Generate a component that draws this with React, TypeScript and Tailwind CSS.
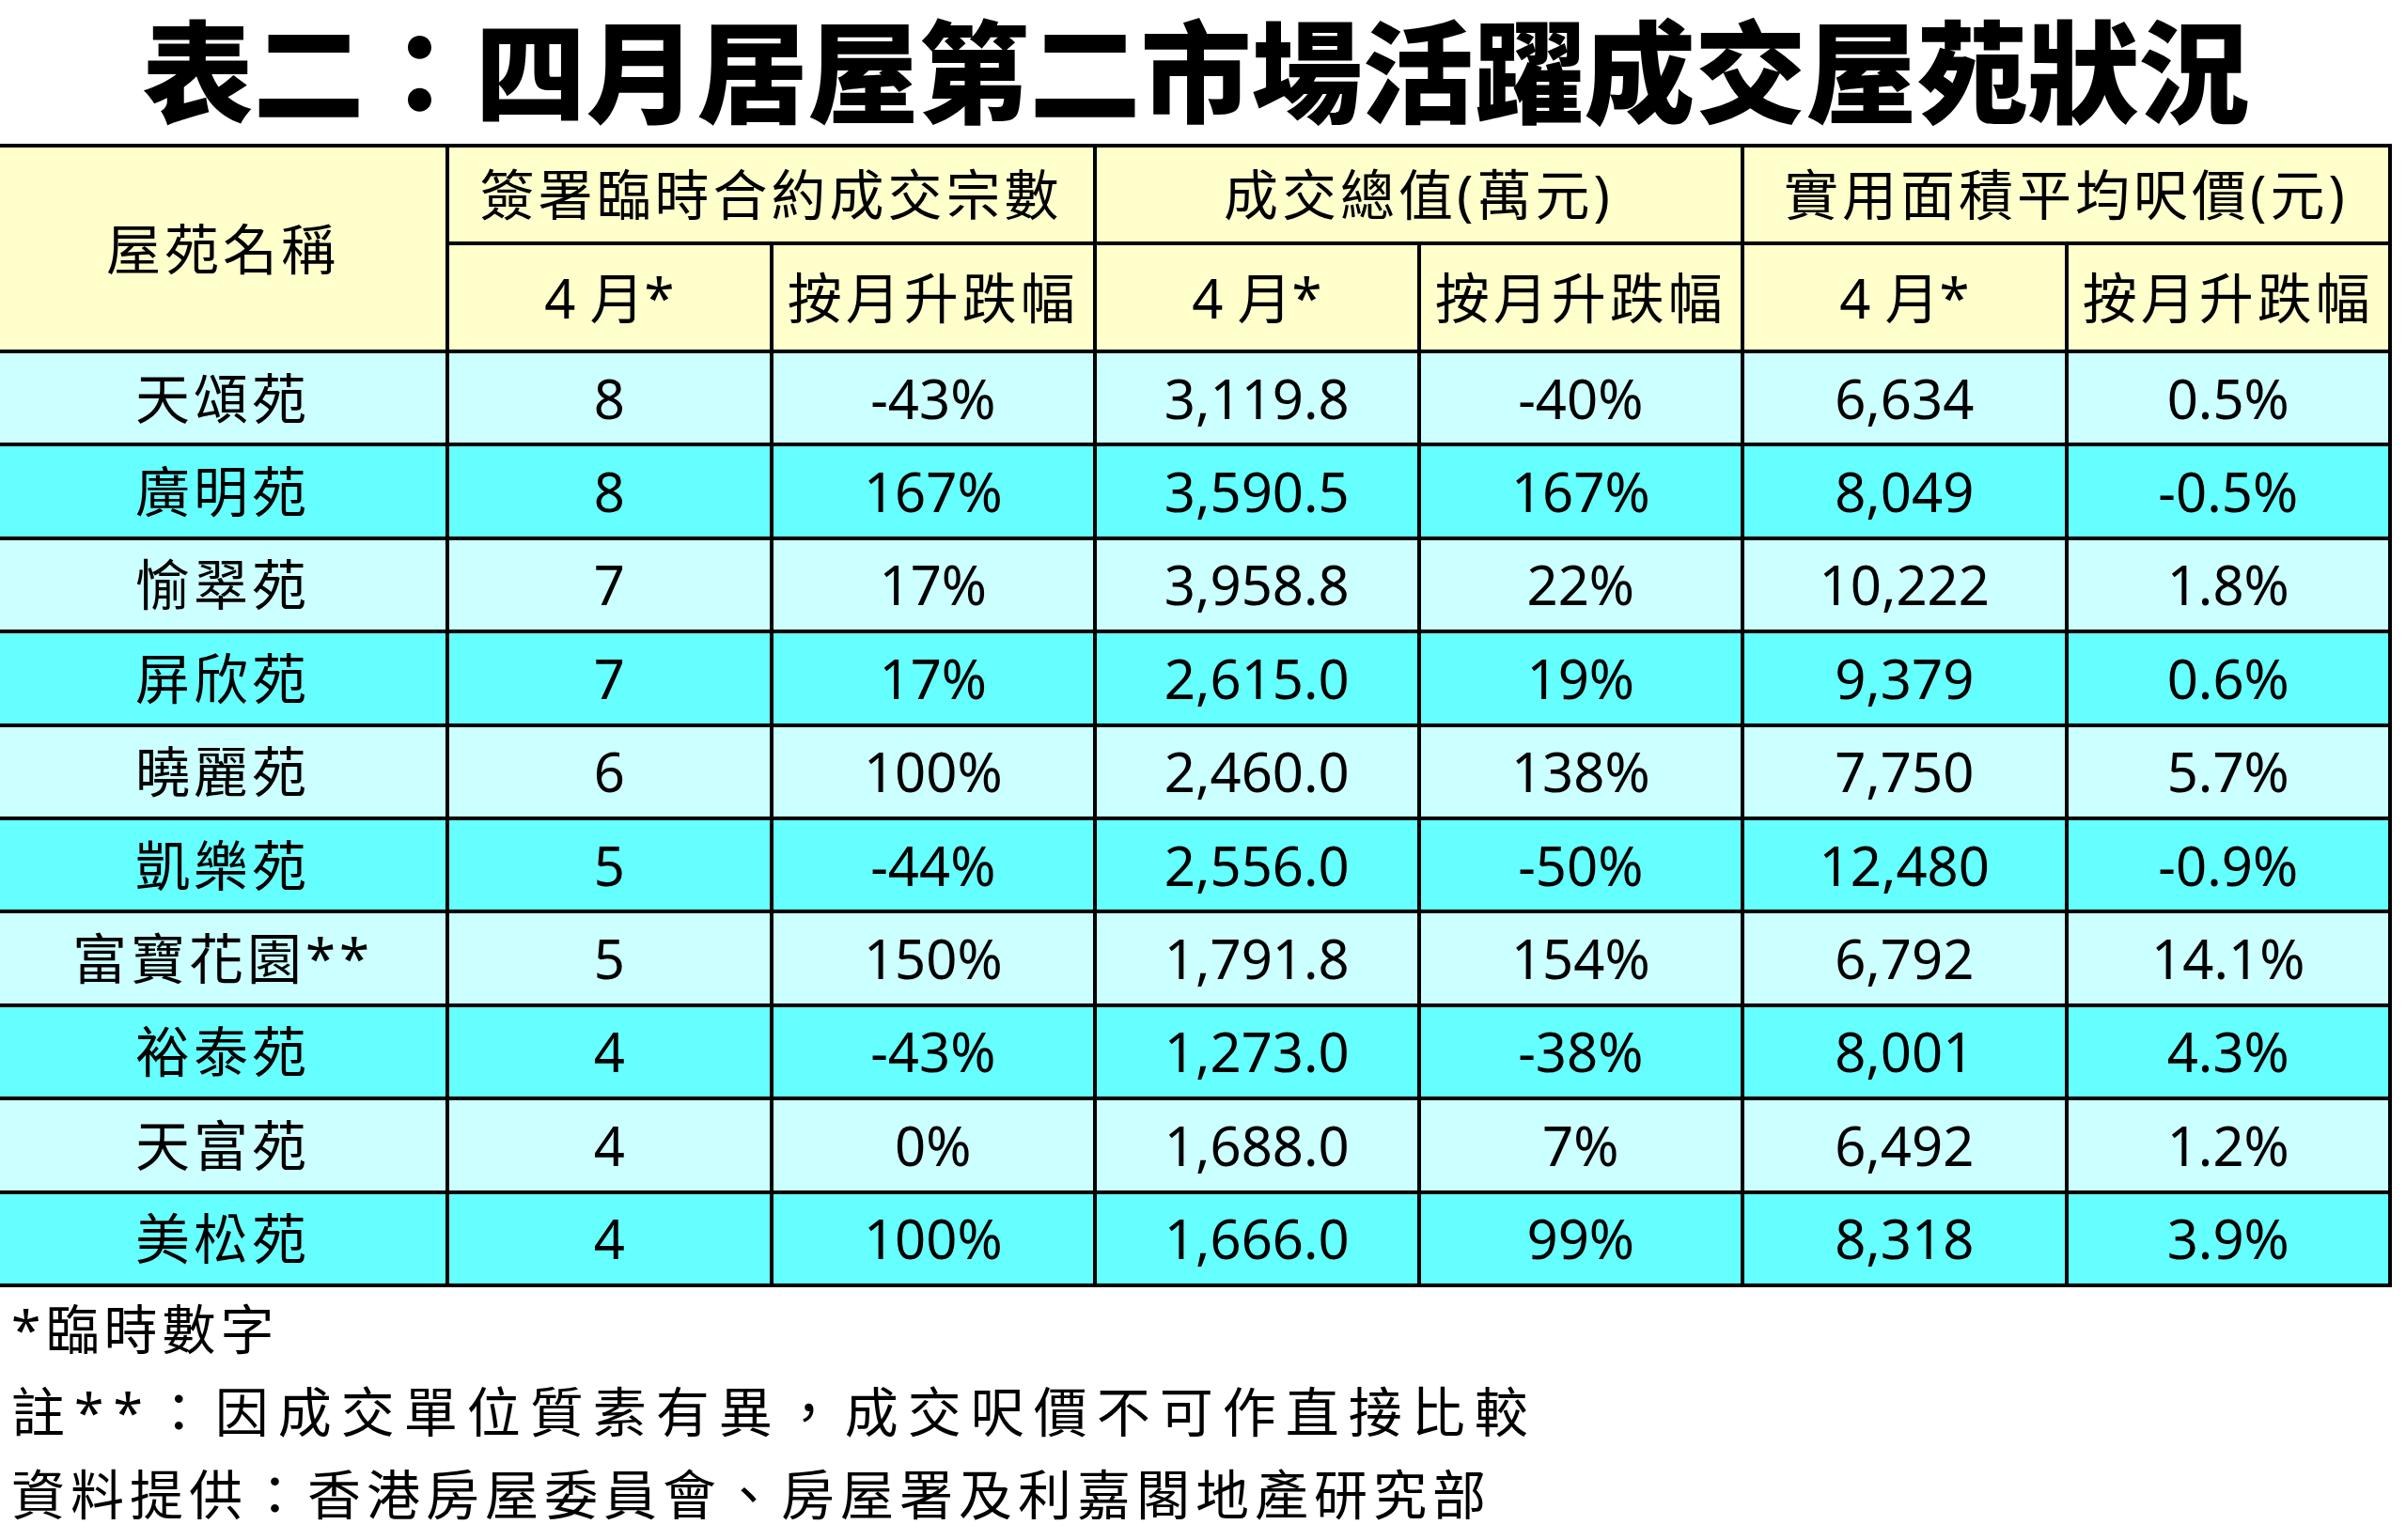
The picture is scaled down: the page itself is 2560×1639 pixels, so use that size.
import React from "react";

const rows: string[][] = [
  ["天頌苑", "8", "-43%", "3,119.8", "-40%", "6,634", "0.5%"],
  ["廣明苑", "8", "167%", "3,590.5", "167%", "8,049", "-0.5%"],
  ["愉翠苑", "7", "17%", "3,958.8", "22%", "10,222", "1.8%"],
  ["屏欣苑", "7", "17%", "2,615.0", "19%", "9,379", "0.6%"],
  ["曉麗苑", "6", "100%", "2,460.0", "138%", "7,750", "5.7%"],
  ["凱樂苑", "5", "-44%", "2,556.0", "-50%", "12,480", "-0.9%"],
  ["富寶花園**", "5", "150%", "1,791.8", "154%", "6,792", "14.1%"],
  ["裕泰苑", "4", "-43%", "1,273.0", "-38%", "8,001", "4.3%"],
  ["天富苑", "4", "0%", "1,688.0", "7%", "6,492", "1.2%"],
  ["美松苑", "4", "100%", "1,666.0", "99%", "8,318", "3.9%"],
];

const font = "font-['Noto_Sans','Noto_Sans_CJK_TC',sans-serif]";

export default function App() {
  return (
    <div className={`w-[2560px] h-[1639px] bg-white text-black ${font}`}>
      <div className="w-[2545px] h-[153px] flex items-start justify-center">
        <h1 className="font-['Noto_Sans_CJK_TC',sans-serif] font-black text-[118px] leading-[1.2]">
          表二：四月居屋第二市場活躍成交屋苑狀況
        </h1>
      </div>

      <div className="w-[2545px] bg-black pt-[4px] pr-[4px] pb-[4px] pl-0 grid grid-cols-[474px_repeat(6,1fr)] grid-rows-[100px_111px_repeat(10,95.4px)] gap-[4px]">
        <div className="row-span-2 bg-[#ffffcc] flex items-center justify-center text-[58px] tracking-[4px] leading-none">
          屋苑名稱
        </div>
        <div className="col-span-2 bg-[#ffffcc] flex items-center justify-center text-[58px] tracking-[4px] leading-none">
          簽署臨時合約成交宗數
        </div>
        <div className="col-span-2 bg-[#ffffcc] flex items-center justify-center text-[58px] tracking-[4px] leading-none">
          成交總值(萬元)
        </div>
        <div className="col-span-2 bg-[#ffffcc] flex items-center justify-center text-[58px] tracking-[4px] leading-none">
          實用面積平均呎價(元)
        </div>
        {[0, 1, 2].map((i) => (
          <React.Fragment key={i}>
            <div className="bg-[#ffffcc] flex items-center justify-center text-[58px] leading-none">
              4 月*
            </div>
            <div className="bg-[#ffffcc] flex items-center justify-center text-[58px] tracking-[4px] leading-none">
              按月升跌幅
            </div>
          </React.Fragment>
        ))}
        {rows.map((r, ri) => (
          <React.Fragment key={ri}>
            {r.map((c, ci) => (
              <div
                key={ci}
                className={`${ri % 2 === 0 ? "bg-[#ccffff]" : "bg-[#66ffff]"} flex items-center justify-center text-[58px] leading-none ${ci === 0 ? "tracking-[4px]" : ""}`}
              >
                {c}
              </div>
            ))}
          </React.Fragment>
        ))}
      </div>

      <div className="pl-[12px] text-[57px] leading-[88px]">
        <div className="tracking-[5px]">*臨時數字</div>
        <div className="tracking-[10px]">註**：因成交單位質素有異，成交呎價不可作直接比較</div>
        <div className="tracking-[6px]">資料提供：香港房屋委員會、房屋署及利嘉閣地產研究部</div>
      </div>
    </div>
  );
}
